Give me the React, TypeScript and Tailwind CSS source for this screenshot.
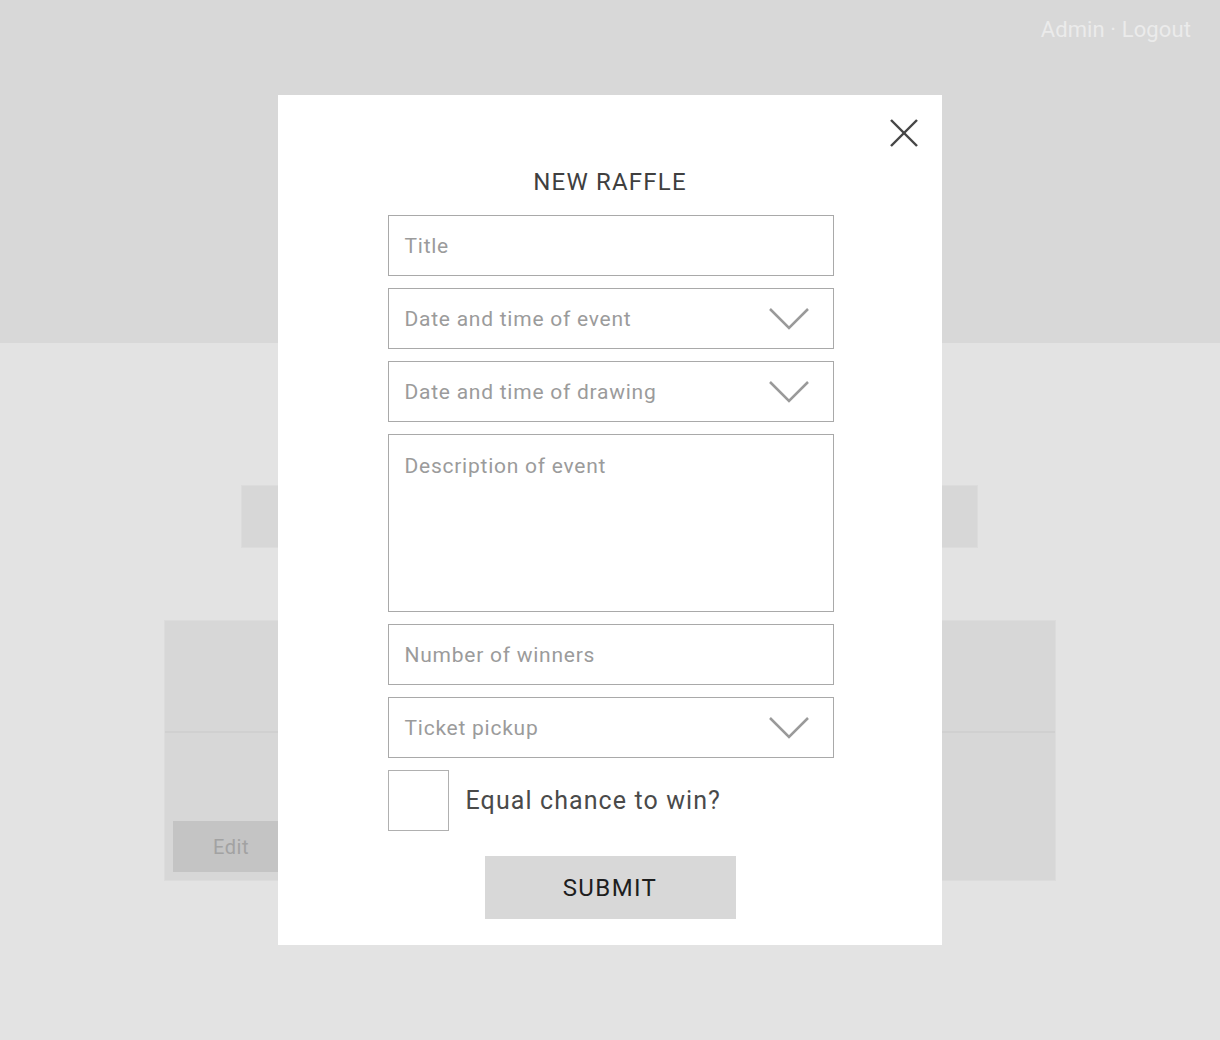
import { type FC } from "react"

const Chevron: FC = () => (
    <svg width="42" height="22" viewBox="0 0 42 22" fill="none" className="shrink-0">
        <polyline points="2,1 21,20 40,1" stroke="#9a9a9a" strokeWidth="2.5" />
    </svg>
)

const Field: FC<{ label: string; select?: boolean }> = ({ label, select }) => (
    <div className="flex h-[61px] w-full items-center justify-between border border-[#a9a9a9] pl-4 pr-[23px]">
        <span className="pt-[3px] text-[21px] tracking-[0.75px] text-[#9b9b9b]">{label}</span>
        {select && <Chevron />}
    </div>
)

const App: FC = () => {
    return (
        <div className="relative min-h-[1040px] bg-[#e3e3e3] font-['Roboto',sans-serif]">
            <header className="flex h-[343px] justify-end bg-[#d8d8d8] pr-[29px] pt-[15px]">
                <span className="text-[22px] leading-[30px] tracking-[0.1px] text-[#ebebeb]">Admin · Logout</span>
            </header>

            <div className="ml-[241px] mt-[142px] h-[63px] w-[737px] border border-[#dcdcdc] bg-[#d7d7d7]" />

            <div className="ml-[164px] mt-[72px] flex h-[261px] w-[892px] flex-col border border-[#dcdcdc] bg-[#d7d7d7]">
                <div className="h-[112px] border-b-2 border-[#d0d0d0]" />
                <div className="mt-auto mb-[8px] ml-[8px] flex h-[51px] w-[116px] items-center justify-center bg-[#c4c4c4]">
                    <span className="pt-[1px] text-[20px] tracking-[0.5px] text-[#a2a2a2]">Edit</span>
                </div>
            </div>

            <div className="absolute left-0 right-0 top-[95px] mx-auto flex h-[850px] w-[664px] flex-col items-center bg-white pt-[69px]">
                <button className="absolute right-[22px] top-[22px]">
                    <svg width="32" height="32" viewBox="0 0 32 32" fill="none">
                        <line x1="3" y1="3" x2="29" y2="29" stroke="#454545" strokeWidth="2.4" />
                        <line x1="29" y1="3" x2="3" y2="29" stroke="#454545" strokeWidth="2.4" />
                    </svg>
                </button>

                <h1 className="text-[24px] leading-[36px] tracking-[1.2px] text-[#3f3f3f]">NEW RAFFLE</h1>

                <div className="ml-[1px] mt-[15px] flex w-[446px] flex-col gap-[12px]">
                    <Field label="Title" />
                    <Field label="Date and time of event" select />
                    <Field label="Date and time of drawing" select />
                    <div className="h-[178px] border border-[#a9a9a9] pl-4 pt-[17px]">
                        <span className="text-[21px] leading-[28px] tracking-[0.75px] text-[#9b9b9b]">
                            Description of event
                        </span>
                    </div>
                    <Field label="Number of winners" />
                    <Field label="Ticket pickup" select />
                    <div className="flex items-center gap-[17px]">
                        <div className="h-[61px] w-[61px] border border-[#b0b0b0]" />
                        <span className="text-[25px] tracking-[1.1px] text-[#4a4a4a]">Equal chance to win?</span>
                    </div>
                </div>

                <button className="mt-[25px] flex h-[63px] w-[251px] items-center justify-center bg-[#d8d8d8]">
                    <span className="text-[24px] tracking-[1.4px] text-[#1e1e1e]">SUBMIT</span>
                </button>
            </div>
        </div>
    )
}

export default App
